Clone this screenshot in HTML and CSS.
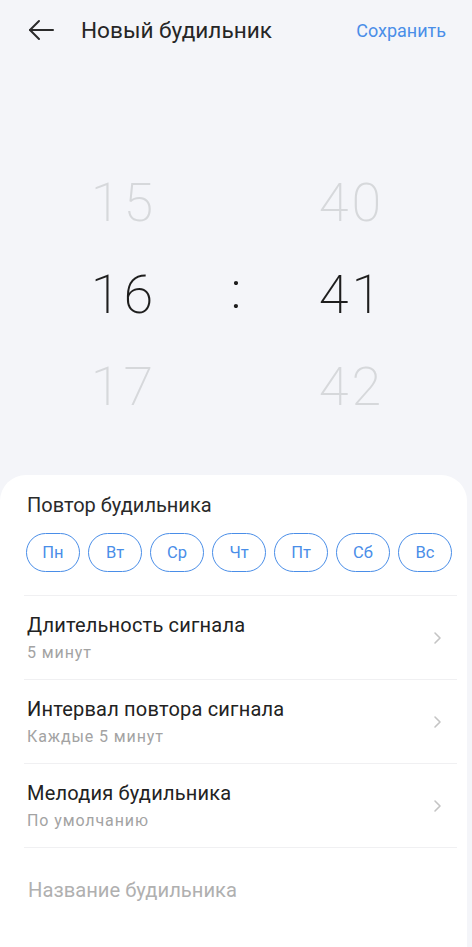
FILE: index.html
```html
<!DOCTYPE html>
<html lang="ru">
<head>
  <meta charset="UTF-8">
  <meta name="viewport" content="width=device-width, initial-scale=1.0">
  <title>Новый будильник</title>
  <link rel="stylesheet" href="styles.css">
</head>
<body>
  <div class="screen">
    <header class="topbar">
      <button class="back" aria-label="Назад">
        <svg width="28" height="24" viewBox="0 0 28 24" fill="none" stroke="#2b2b2b" stroke-width="2" stroke-linecap="round" stroke-linejoin="round">
          <path d="M26 12H3"/>
          <path d="M12 3L3 12l9 9"/>
        </svg>
      </button>
      <h1 class="title">Новый будильник</h1>
      <a class="save" href="#">Сохранить</a>
    </header>

    <section class="picker">
      <div class="wheel">
        <span class="num faded">15</span>
        <span class="num">16</span>
        <span class="num faded">17</span>
      </div>
      <div class="colon">:</div>
      <div class="wheel">
        <span class="num faded">40</span>
        <span class="num">41</span>
        <span class="num faded">42</span>
      </div>
    </section>

    <section class="sheet">
      <div class="repeat">
        <p class="label">Повтор будильника</p>
        <div class="days">
          <button class="day">Пн</button>
          <button class="day">Вт</button>
          <button class="day">Ср</button>
          <button class="day">Чт</button>
          <button class="day">Пт</button>
          <button class="day">Сб</button>
          <button class="day">Вс</button>
        </div>
      </div>

      <div class="row">
        <div class="row-text">
          <p class="row-title">Длительность сигнала</p>
          <p class="row-sub">5 минут</p>
        </div>
        <svg class="chevron" width="10" height="14" viewBox="0 0 10 14" fill="none" stroke="#c4c4c4" stroke-width="1.6" stroke-linecap="round" stroke-linejoin="round"><path d="M3 2l5 5-5 5"/></svg>
      </div>

      <div class="row">
        <div class="row-text">
          <p class="row-title">Интервал повтора сигнала</p>
          <p class="row-sub">Каждые 5 минут</p>
        </div>
        <svg class="chevron" width="10" height="14" viewBox="0 0 10 14" fill="none" stroke="#c4c4c4" stroke-width="1.6" stroke-linecap="round" stroke-linejoin="round"><path d="M3 2l5 5-5 5"/></svg>
      </div>

      <div class="row">
        <div class="row-text">
          <p class="row-title">Мелодия будильника</p>
          <p class="row-sub">По умолчанию</p>
        </div>
        <svg class="chevron" width="10" height="14" viewBox="0 0 10 14" fill="none" stroke="#c4c4c4" stroke-width="1.6" stroke-linecap="round" stroke-linejoin="round"><path d="M3 2l5 5-5 5"/></svg>
      </div>

      <input class="name" type="text" placeholder="Название будильника">
    </section>
  </div>
</body>
</html>
```

FILE: styles.css
```css
* {
  box-sizing: border-box;
}

body {
  margin: 0;
  background-color: #f4f5f9;
  font-family: Roboto, "Noto Sans", sans-serif;
  color: #222;
}

.screen {
  height: 947px;
  display: flex;
  flex-direction: column;
  overflow: hidden;
}

p {
  margin: 0;
}

.topbar {
  display: flex;
  align-items: center;
  height: 60px;
  padding: 0 26px 0 27px;
}

.back {
  border: none;
  background: none;
  padding: 0;
  width: 28px;
  height: 24px;
  display: flex;
}

.title {
  margin: 0 0 0 26px;
  font-size: 22.6px;
  font-weight: 400;
  color: #262626;
  flex: 1;
}

.save {
  color: #4a8ee8;
  font-size: 18px;
  text-decoration: none;
}

/* time wheel */
.picker {
  display: flex;
  justify-content: center;
  align-items: flex-start;
  height: 415px;
  padding-top: 97px;
}

.wheel {
  display: flex;
  flex-direction: column;
  align-items: center;
  width: 120px;
}

.num {
  font-size: 54px;
  font-weight: 200;
  letter-spacing: 3px;
  line-height: 92px;
  color: #1e1e1e;
  padding-left: 3px;
}

.num.faded {
  color: #d6d8db;
}

.colon {
  width: 108px;
  text-align: center;
  font-size: 50px;
  font-weight: 300;
  line-height: 92px;
  margin-top: 88px;
  color: #1e1e1e;
}

/* bottom sheet */
.sheet {
  flex: 1;
  background-color: #fff;
  border-radius: 26px 26px 0 0;
  margin-right: 5px;
  padding: 18px 10px 0 24px;
}

.label {
  font-size: 20px;
  color: #2a2a2a;
  padding-left: 3px;
  line-height: 24px;
}

.days {
  display: flex;
  gap: 8px;
  margin-top: 16px;
  padding-left: 2px;
}

.day {
  flex: none;
  width: 54px;
  height: 39px;
  border: 1.5px solid #4a8ee8;
  border-radius: 20px;
  background: none;
  color: #4a8ee8;
  font-family: inherit;
  font-size: 16.5px;
  padding: 0;
}

.repeat {
  padding-bottom: 23px;
  border-bottom: 1px solid #f0f0f2;
}

.row {
  display: flex;
  align-items: center;
  height: 84px;
  border-bottom: 1px solid #f0f0f2;
  padding: 0 15px 0 3px;
}

.row-text {
  flex: 1;
}

.row-title {
  font-size: 20px;
  letter-spacing: 0.2px;
  color: #222;
  line-height: 24px;
}

.row-sub {
  font-size: 16px;
  letter-spacing: 0.9px;
  color: #a3a3a3;
  margin-top: 6px;
  line-height: 20px;
}

.name {
  border: none;
  outline: none;
  width: 100%;
  margin-top: 30px;
  padding: 0 0 0 4px;
  font-family: inherit;
  font-size: 20.2px;
  color: #222;
  background: none;
}

.name::placeholder {
  color: #b0b0b0;
}
```
